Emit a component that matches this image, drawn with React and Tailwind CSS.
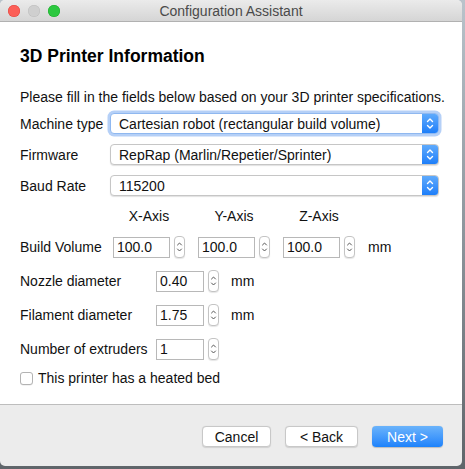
import React from "react";

const font = { fontFamily: '"Liberation Sans", Arial, Helvetica, sans-serif' };

function SelectChevrons() {
  return (
    <svg width="16" height="21" viewBox="0 0 16 21" fill="none">
      <path d="M5.5 8.5 L8 6 L10.5 8.5" stroke="white" strokeWidth="1.4" strokeLinecap="round" strokeLinejoin="round" />
      <path d="M5.5 12.5 L8 15 L10.5 12.5" stroke="white" strokeWidth="1.4" strokeLinecap="round" strokeLinejoin="round" />
    </svg>
  );
}

function Select({ value, focused }) {
  return (
    <div
      className={
        "flex h-[21px] w-[329px] items-stretch rounded-[4px] border bg-white " +
        (focused
          ? "border-[#8fb8f0] shadow-[0_0_0_2.5px_rgba(120,170,240,0.55)]"
          : "border-[#c6c6c6] shadow-[0_1px_1px_rgba(0,0,0,0.12)]")
      }
    >
      <div className="flex flex-1 items-center pl-[8px] text-[14px] leading-[16px] text-[#111]">{value}</div>
      <div className="flex w-[16px] items-center justify-center rounded-r-[3px] bg-gradient-to-b from-[#5eaafc] to-[#1c7ef9]">
        <SelectChevrons />
      </div>
    </div>
  );
}

function Stepper() {
  return (
    <div className="flex h-[22px] w-[11px] items-center justify-center rounded-[4px] border border-[#c4c4c4] bg-white shadow-[0_1px_1px_rgba(0,0,0,0.1)]">
      <svg width="9" height="20" viewBox="0 0 9 20" fill="none">
        <path d="M2.5 8 L4.5 6 L6.5 8" stroke="#555" strokeWidth="1" strokeLinecap="round" strokeLinejoin="round" />
        <path d="M2.5 12 L4.5 14 L6.5 12" stroke="#555" strokeWidth="1" strokeLinecap="round" strokeLinejoin="round" />
      </svg>
    </div>
  );
}

function NumberField({ value, width }) {
  return (
    <div className="flex items-center gap-[4px]">
      <div
        className={
          "flex h-[21px] items-center border border-[#b8b8b8] bg-white pl-[3px] text-[14px] leading-[16px] text-[#111] " +
          width
        }
      >
        {value}
      </div>
      <Stepper />
    </div>
  );
}

function Button({ children, primary, width }) {
  return (
    <div
      className={
        "flex h-[21px] items-center justify-center rounded-[4px] text-[14px] leading-[16px] " +
        width +
        " " +
        (primary
          ? "bg-gradient-to-b from-[#6ab3fb] to-[#1b82fb] text-white shadow-[0_0.5px_1px_rgba(0,0,0,0.2)]"
          : "border border-[#c8c8c8] bg-white text-[#111] shadow-[0_0.5px_1px_rgba(0,0,0,0.12)]")
      }
    >
      {children}
    </div>
  );
}

export default function App() {
  return (
    <div className="h-[469px] w-[465px] overflow-hidden bg-gradient-to-b from-[#b9c3cb] via-[#8d959c] to-[#5f656a]" style={font}>
      <div className="flex h-[466px] w-[462px] flex-col overflow-hidden rounded-b-[5px] rounded-t-[5px] bg-[#ececec]">
        {/* Title bar */}
        <div className="relative flex h-[22px] shrink-0 items-center justify-center border-b border-[#b1b1b1] bg-gradient-to-b from-[#ebebeb] to-[#d5d5d5]">
          <div className="absolute left-[8px] top-[5px] flex gap-[8px]">
            <div className="h-[12px] w-[12px] rounded-full bg-[#fc5f57] shadow-[inset_0_0_0_0.5px_#e0443e]" />
            <div className="h-[12px] w-[12px] rounded-full bg-[#cfcfcf] shadow-[inset_0_0_0_0.5px_#bdbdbd]" />
            <div className="h-[12px] w-[12px] rounded-full bg-[#2cc840] shadow-[inset_0_0_0_0.5px_#1aab29]" />
          </div>
          <span className="text-[14px] leading-[16px] text-[#4a4a4a]">Configuration Assistant</span>
        </div>

        {/* Page content */}
        <div className="flex h-[382px] shrink-0 flex-col bg-white pl-[20px] text-[14px] leading-[16px] text-[#111]">
          <h1 className="mt-[24px] text-[17.5px] font-bold leading-[20px] text-black">3D Printer Information</h1>
          <p className="mt-[23px] leading-[16px]">
            Please fill in the fields below based on your 3D printer specifications.
          </p>

          <div className="mt-[8px] flex items-center">
            <span className="w-[90px]">Machine type</span>
            <Select value="Cartesian robot (rectangular build volume)" focused />
          </div>
          <div className="mt-[10px] flex items-center">
            <span className="w-[90px]">Firmware</span>
            <Select value="RepRap (Marlin/Repetier/Sprinter)" />
          </div>
          <div className="mt-[10px] flex items-center">
            <span className="w-[90px]">Baud Rate</span>
            <Select value="115200" />
          </div>

          <div className="mt-[12px] flex pl-[93px] leading-[16px]">
            <span className="w-[72px] text-center">X-Axis</span>
            <span className="ml-[13px] w-[72px] text-center">Y-Axis</span>
            <span className="ml-[13px] w-[72px] text-center">Z-Axis</span>
          </div>

          <div className="mt-[12px] flex items-center">
            <span className="w-[93px]">Build Volume</span>
            <NumberField value="100.0" width="w-[57px]" />
            <div className="ml-[13px]">
              <NumberField value="100.0" width="w-[57px]" />
            </div>
            <div className="ml-[13px]">
              <NumberField value="100.0" width="w-[57px]" />
            </div>
            <span className="ml-[13px]">mm</span>
          </div>

          <div className="mt-[12px] flex items-center">
            <span className="w-[136px]">Nozzle diameter</span>
            <NumberField value="0.40" width="w-[48px]" />
            <span className="ml-[12px]">mm</span>
          </div>
          <div className="mt-[12px] flex items-center">
            <span className="w-[136px]">Filament diameter</span>
            <NumberField value="1.75" width="w-[48px]" />
            <span className="ml-[12px]">mm</span>
          </div>
          <div className="mt-[12px] flex items-center">
            <span className="w-[136px]">Number of extruders</span>
            <NumberField value="1" width="w-[48px]" />
          </div>

          <div className="mt-[10px] flex items-center gap-[5px] leading-[16px]">
            <div className="h-[13px] w-[13px] rounded-[3px] border border-[#b3b3b3] bg-white shadow-[0_0.5px_0.5px_rgba(0,0,0,0.1)]" />
            <span>This printer has a heated bed</span>
          </div>
        </div>

        {/* Footer */}
        <div className="flex flex-1 items-start justify-end gap-[14px] border-t border-[#bdbdbd] pr-[19px] pt-[21px]">
          <Button width="w-[69px]">Cancel</Button>
          <Button width="w-[73px]">&lt; Back</Button>
          <Button width="w-[71px]" primary>Next &gt;</Button>
        </div>
      </div>
    </div>
  );
}
